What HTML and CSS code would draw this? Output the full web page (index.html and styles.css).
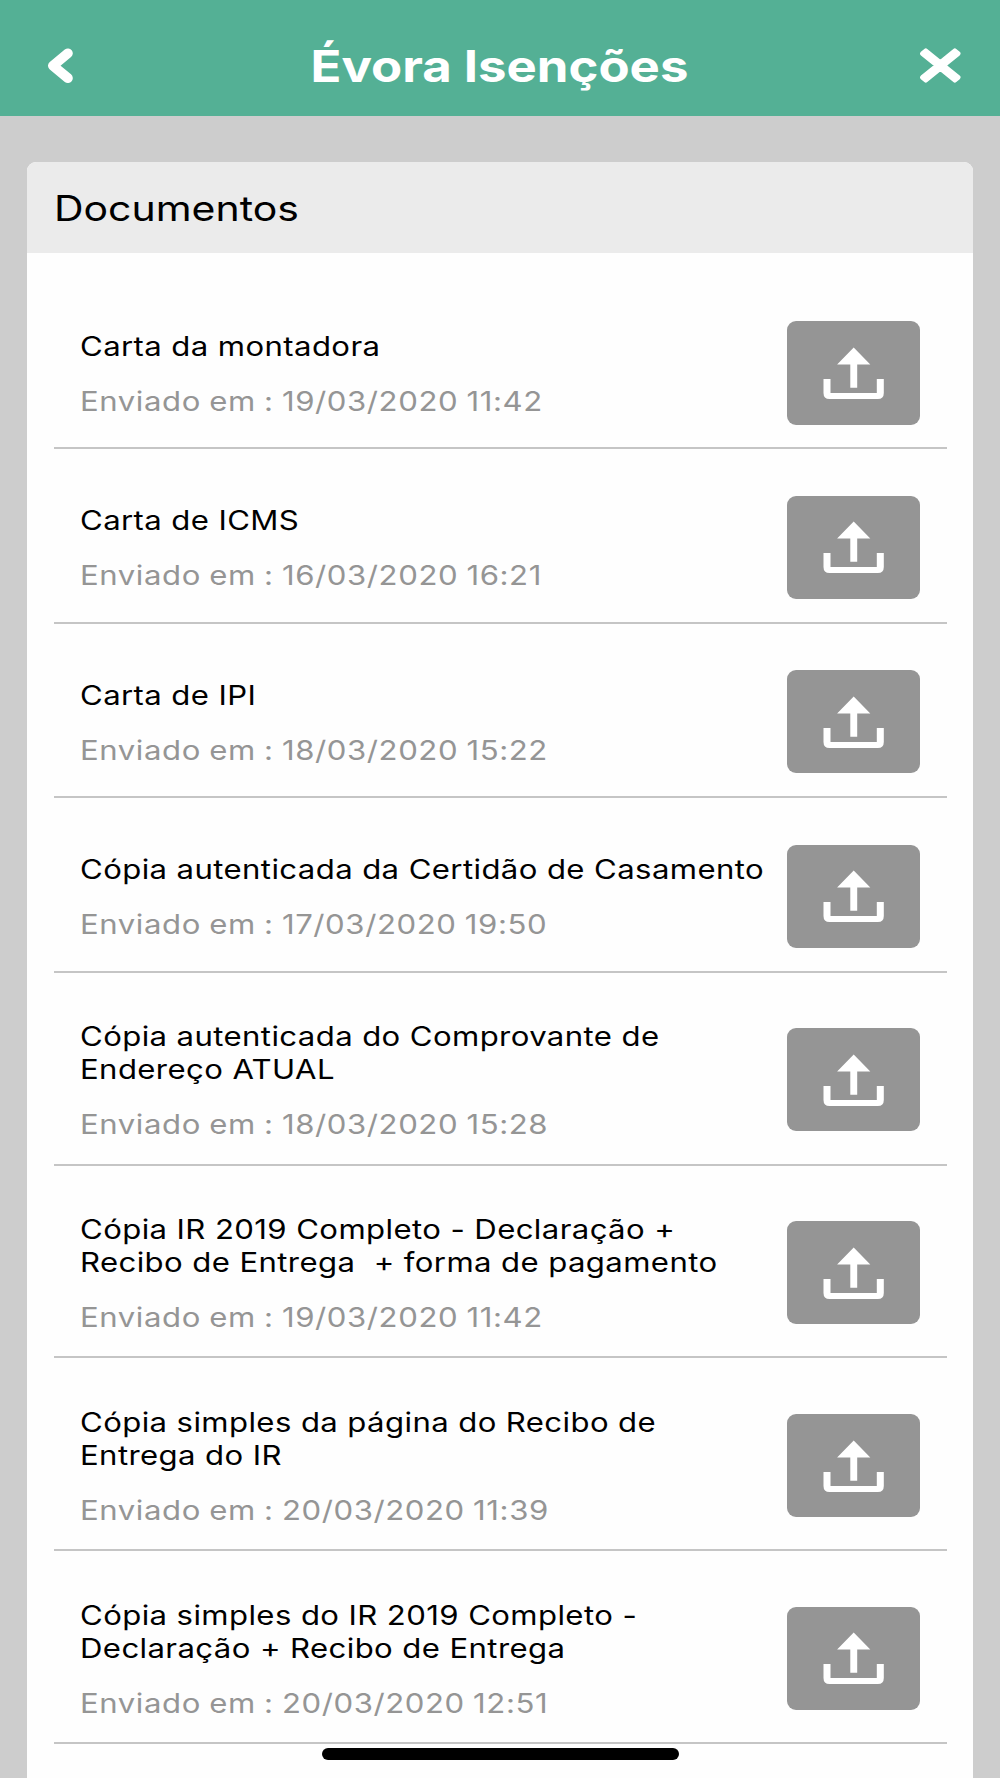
FILE: index.html
```html
<!DOCTYPE html>
<html lang="pt-BR">
<head>
  <meta charset="UTF-8">
  <meta name="viewport" content="width=device-width, initial-scale=1.0">
  <title>Évora Isenções</title>
  <link rel="stylesheet" href="styles.css">
</head>
<body>
  <svg class="sprite">
    <symbol id="upload" viewBox="0 0 61 52">
      <path d="M30.7 0.4L47.3 17.4H34.2V40.7H27.3V17.4H14.1z"/>
      <path d="M0.5 31.9H7.5V45.9H53.8V31.9H60.8V45.9Q60.8 51.9 54.8 51.9H6.5Q0.5 51.9 0.5 45.9z"/>
    </symbol>
  </svg>

  <header class="topbar">
    <button class="nav-button" title="Voltar">
      <svg class="icon-back" width="26" height="36" viewBox="0 0 26 36">
        <path d="M20.9 5.3L5.9 17.7L20.9 30.1"/>
      </svg>
    </button>
    <h1><span class="wide">Évora Isenções</span></h1>
    <button class="nav-button" title="Fechar">
      <svg class="icon-close" width="41" height="36" viewBox="0 0 41 36">
        <path d="M5.8 2.7L20.3 14.6L34.8 2.7L38.2 5.6L23.6 17.5L38.2 29.4L34.8 32.3L20.3 20.4L5.8 32.3L2.4 29.4L17 17.5L2.4 5.6z"/>
      </svg>
    </button>
  </header>

  <main class="card">
    <h2><span class="wide">Documentos</span></h2>
    <ul class="documents"></ul>
  </main>

  <div class="home-bar"></div>

  <script>
    const documents = [
      { name: ["Carta da montadora"], date: "19/03/2020 11:42" },
      { name: ["Carta de ICMS"], date: "16/03/2020 16:21" },
      { name: ["Carta de IPI"], date: "18/03/2020 15:22" },
      { name: ["Cópia autenticada da Certidão de Casamento"], date: "17/03/2020 19:50" },
      { name: ["Cópia autenticada do Comprovante de", "Endereço ATUAL"], date: "18/03/2020 15:28" },
      { name: ["Cópia IR 2019 Completo - Declaração +", "Recibo de Entrega  + forma de pagamento"], date: "19/03/2020 11:42" },
      { name: ["Cópia simples da página do Recibo de", "Entrega do IR"], date: "20/03/2020 11:39" },
      { name: ["Cópia simples do IR 2019 Completo -", "Declaração + Recibo de Entrega"], date: "20/03/2020 12:51" }
    ]

    const list = document.querySelector(".documents")

    documents.forEach(doc => {
      const item = document.createElement("li")
      item.classList.add("document")
      item.innerHTML = `
        <div class="info">
          <p class="name">${doc.name.map(line => `<span class="wide">${line}</span>`).join("")}</p>
          <p class="date"><span class="wide">Enviado em : ${doc.date}</span></p>
        </div>
        <button class="upload" title="Enviar">
          <svg width="61" height="52"><use href="#upload"/></svg>
        </button>`
      list.appendChild(item)
    })
  </script>
</body>
</html>
```
FILE: styles.css
```css
* {
  box-sizing: border-box;
}

body {
  margin: 0;
  height: 1778px;
  overflow: hidden;
  display: flex;
  flex-direction: column;

  font-family: Inter, "Liberation Sans", sans-serif;
  color: #000;
  background-color: #cdcdcd;
}

h1, h2, p, ul {
  margin: 0;
  padding: 0;
}

button {
  padding: 0;
  border: none;
  cursor: pointer;
}

.sprite {
  position: absolute;
  width: 0;
  height: 0;
}

/* extended lettering */
.wide {
  display: block;
  width: max-content;
  white-space: pre;
  transform: translateY(0.6px) scaleX(1.17);
  transform-origin: left center;
}

.topbar {
  flex: none;
  height: 116px;
  padding: 15px 39px 0 47px;

  display: flex;
  justify-content: space-between;
  align-items: center;

  background-color: #54b095;
}
.topbar h1 {
  margin-right: 9px;
  font-size: 44px;
  line-height: 54px;
  font-weight: 700;
  color: #fff;
}
.topbar .wide {
  transform: scaleX(1.156);
  transform-origin: center;
}
.nav-button {
  width: 41px;
  height: 36px;
  display: flex;
  background: none;
}
.icon-back {
  fill: none;
  stroke: #fff;
  stroke-width: 9.8;
  stroke-linecap: round;
  stroke-linejoin: round;
}
.icon-close {
  fill: #fff;
  stroke: #fff;
  stroke-width: 4.6;
  stroke-linejoin: round;
}

.card {
  flex: 1;
  margin: 46px 27px 0;
  border-radius: 9px 9px 0 0;
  overflow: hidden;
  background-color: #fefefe;
}
.card h2 {
  height: 90.7px;
  padding-left: 27px;
  font-size: 35px;
  line-height: 90px;
  font-weight: 400;
  background-color: #ebebeb;
}

.documents {
  list-style: none;
  padding: 22.4px 26.5px 0;
}
.document {
  display: flex;
  justify-content: space-between;
  align-items: center;

  padding: 46.3px 26.5px 22.8px 26.3px;
  border-bottom: 2px solid #c5c5c5;
}
.info {
  font-size: 26.6px;
  line-height: 33.3px;
}
.name {
  margin-bottom: 21.9px;
  letter-spacing: 0.34px;
}
.date {
  color: #959595;
  letter-spacing: 0.5px;
  word-spacing: -0.9px;
}
.date .wide {
  transform: translateY(1.2px) scaleX(1.17);
}

.upload {
  flex: none;
  width: 133.3px;
  height: 103.3px;

  display: flex;
  justify-content: center;
  align-items: center;

  border-radius: 9px;
  background-color: #959595;
}
.upload svg {
  fill: #fff;
}

/* floats over the end of the list */
.home-bar {
  position: fixed;
  left: 321.5px;
  bottom: 18.4px;
  width: 357.5px;
  height: 12px;
  border-radius: 6px;
  background-color: #000;
}
```
